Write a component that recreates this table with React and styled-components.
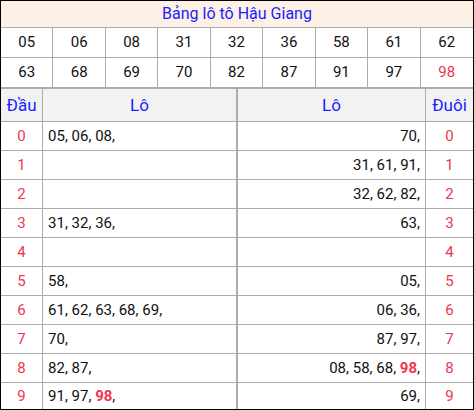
import React from "react";
import styled, { createGlobalStyle } from "styled-components";

const Global = createGlobalStyle`
  html, body { margin: 0; padding: 0; background: #fff; }
  body { font-family: Roboto, "Liberation Sans", Arial, sans-serif; }
`;

const LINE = "#acacac";
const BLUE = "#1c1cff";
const RED = "#ef3650";

const Board = styled.div`
  width: 474px;
  height: 410px;
  box-sizing: border-box;
  border: 1px solid #000;
  overflow: hidden;
  display: flex;
  flex-direction: column;
  color: #111;
`;

const Title = styled.div`
  height: 27px;
  box-sizing: border-box;
  border-bottom: 1px solid ${LINE};
  background: #fdf1e6;
  color: ${BLUE};
  font-size: 16px;
  line-height: 26px;
  text-align: center;
`;

const NumGrid = styled.div`
  display: grid;
  grid-template-columns: repeat(9, 1fr);
`;

const NumCell = styled.div`
  height: 30px;
  box-sizing: border-box;
  border-bottom: 1px solid ${LINE};
  border-right: ${(p) => (p.$last ? "none" : `1px solid ${LINE}`)};
  font-size: 15px;
  line-height: 29px;
  text-align: center;
  color: ${(p) => (p.$hot ? RED : "#111")};
`;

const Table = styled.div`
  display: grid;
  grid-template-columns: 42px 195px 188px 47px;
  border-top: 1px solid ${LINE};
`;

const Cell = styled.div`
  box-sizing: border-box;
  height: ${(p) => (p.$head ? "33px" : p.$end ? "26px" : "29px")};
  border-bottom: ${(p) => (p.$end ? "none" : `1px solid ${LINE}`)};
  border-right: ${(p) =>
    p.$wide ? `2px solid ${LINE}` : p.$edge ? "none" : `1px solid ${LINE}`};
  background: ${(p) => (p.$head ? "#f2f2f2" : "#fff")};
  display: flex;
  align-items: center;
  justify-content: ${(p) =>
    p.$align === "left" ? "flex-start" : p.$align === "right" ? "flex-end" : "center"};
  padding: 0 5px;
  font-size: ${(p) => (p.$head ? "17px" : "15px")};
  color: ${(p) => (p.$head ? BLUE : p.$digit ? RED : "#111")};
  white-space: nowrap;
`;

const Hot = styled.b`
  color: ${RED};
  font-weight: 700;
`;

const top = ["05", "06", "08", "31", "32", "36", "58", "61", "62", "63", "68", "69", "70", "82", "87", "91", "97", "98"];
const hot = new Set(["98"]);

const dau = [
  ["05", "06", "08"],
  [],
  [],
  ["31", "32", "36"],
  [],
  ["58"],
  ["61", "62", "63", "68", "69"],
  ["70"],
  ["82", "87"],
  ["91", "97", "98"],
];
const duoi = [
  ["70"],
  ["31", "61", "91"],
  ["32", "62", "82"],
  ["63"],
  [],
  ["05"],
  ["06", "36"],
  ["87", "97"],
  ["08", "58", "68", "98"],
  ["69"],
];

const List = ({ items }) => (
  <span>
    {items.map((n, i) => (
      <React.Fragment key={n}>
        {i > 0 ? " " : ""}
        {hot.has(n) ? <Hot>{n}</Hot> : n},
      </React.Fragment>
    ))}
  </span>
);

export default function App() {
  return (
    <>
      <Global />
      <Board>
        <Title>Bảng lô tô Hậu Giang</Title>
        <NumGrid>
          {top.map((n, i) => (
            <NumCell key={i} $last={i % 9 === 8} $hot={hot.has(n)}>
              {n}
            </NumCell>
          ))}
        </NumGrid>
        <Table>
          <Cell $head>Đầu</Cell>
          <Cell $head $wide>Lô</Cell>
          <Cell $head>Lô</Cell>
          <Cell $head $edge>Đuôi</Cell>
          {dau.map((items, i) => {
            const end = i === 9;
            return (
              <React.Fragment key={i}>
                <Cell $digit $end={end}>{i}</Cell>
                <Cell $align="left" $wide $end={end}>
                  <List items={items} />
                </Cell>
                <Cell $align="right" $end={end}>
                  <List items={duoi[i]} />
                </Cell>
                <Cell $digit $edge $end={end}>{i}</Cell>
              </React.Fragment>
            );
          })}
        </Table>
      </Board>
    </>
  );
}
